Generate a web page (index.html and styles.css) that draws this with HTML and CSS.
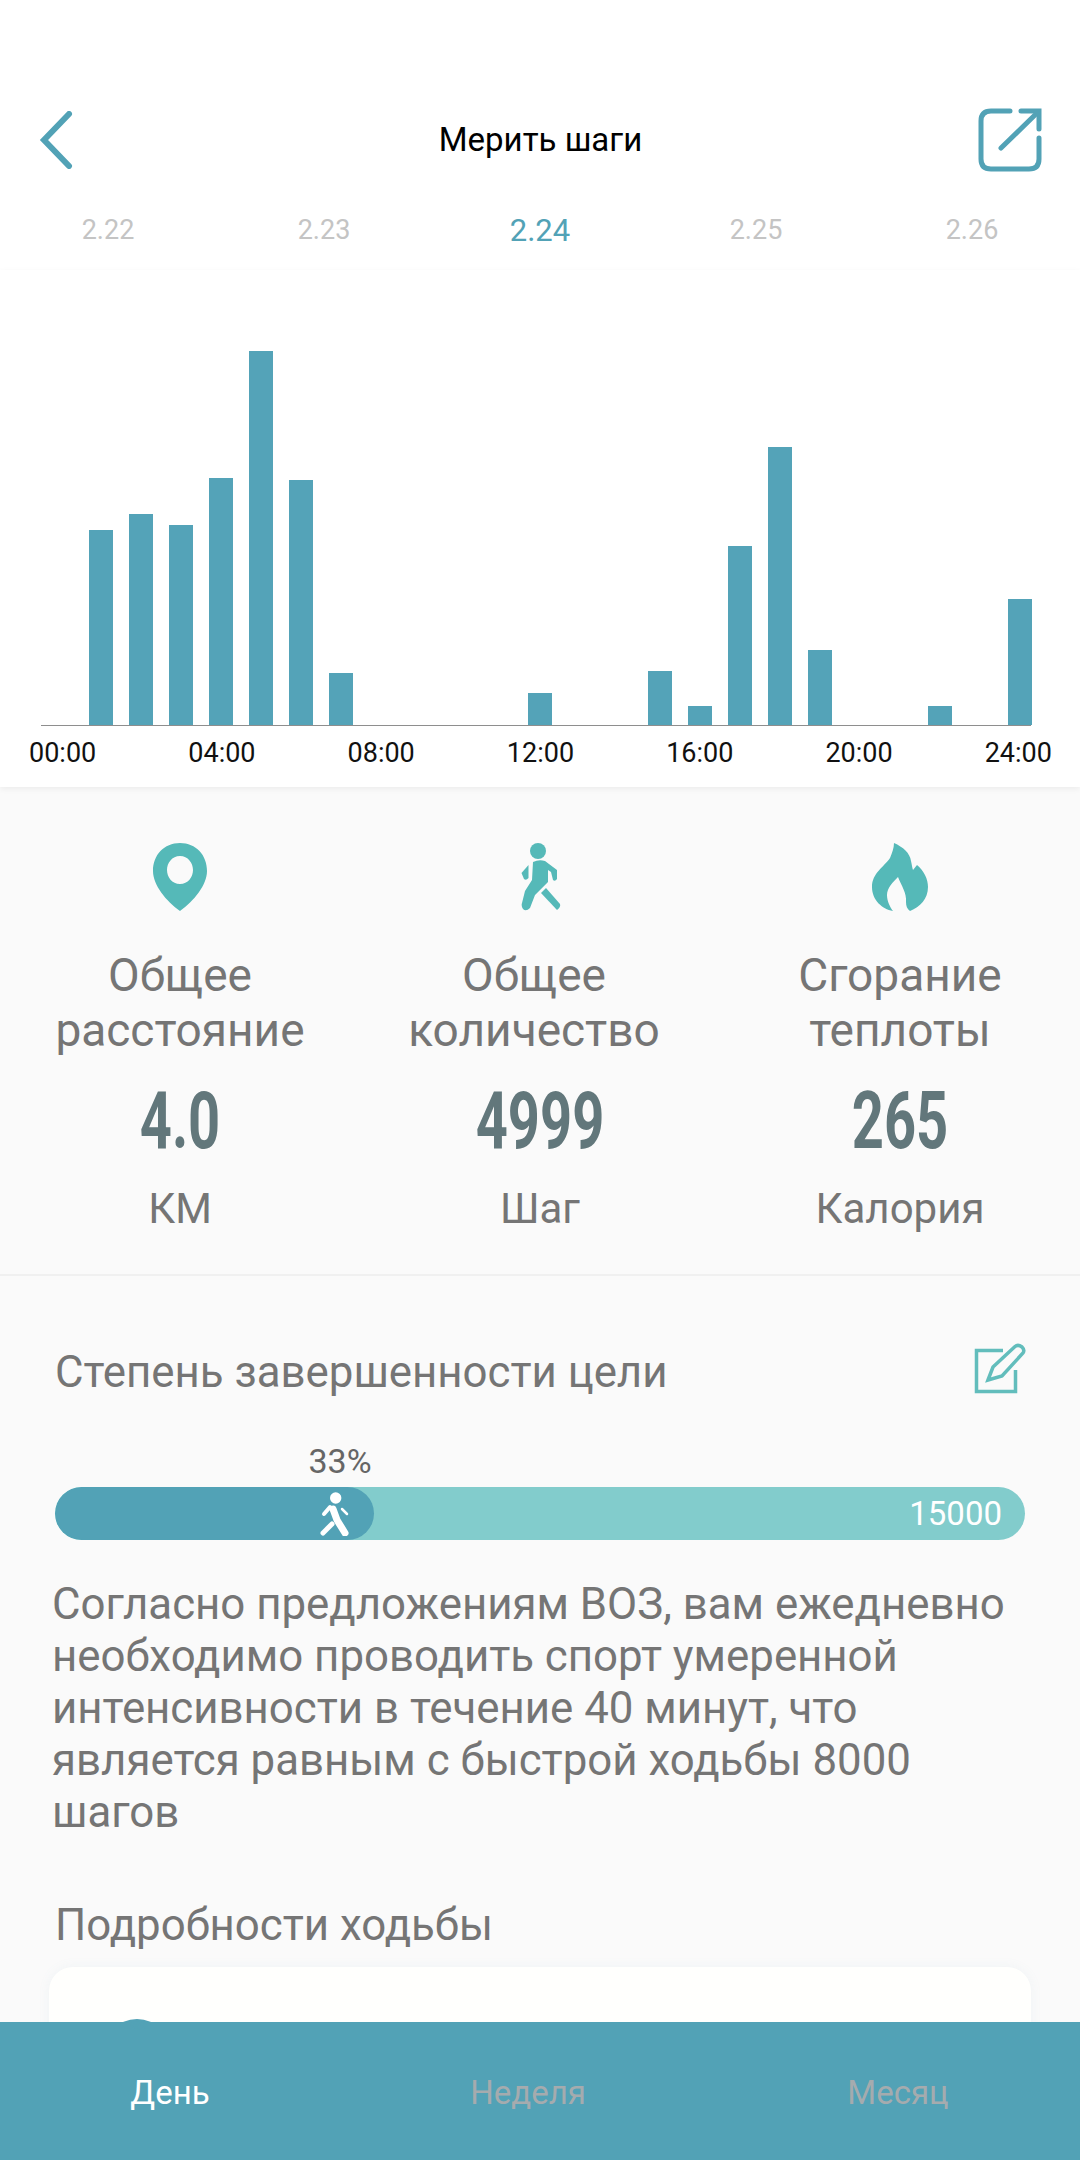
FILE: index.html
```html
<!DOCTYPE html>
<html lang="ru">
<head>
    <meta charset="UTF-8">
    <meta name="viewport" content="width=device-width, initial-scale=1.0">
    <title>Мерить шаги</title>
    <link rel="stylesheet" href="styles.css">
</head>
<body>
    <div class="content">
        <!-- Header -->
        <div class="header">
            <svg class="back-icon" viewBox="0 0 34 58"><path d="M30 3 L5 29 L30 55"/></svg>
            <h1>Мерить шаги</h1>
            <svg class="share-icon" viewBox="0 0 64 66"><path d="M32 4 H13 Q3 4 3 14 V52 Q3 62 13 62 H51 Q61 62 61 52 V31"/><path d="M23 41 L60 5"/><path d="M43 4 H61 V22"/></svg>
        </div>

        <!-- Dates -->
        <div class="dates">
            <span>2.22</span>
            <span>2.23</span>
            <span class="current">2.24</span>
            <span>2.25</span>
            <span>2.26</span>
        </div>

        <!-- Chart -->
        <div class="chart">
            <div class="bars">
                <div class="bar" style="height: 195px"></div>
                <div class="bar" style="height: 211px"></div>
                <div class="bar" style="height: 200px"></div>
                <div class="bar" style="height: 247px"></div>
                <div class="bar" style="height: 374px"></div>
                <div class="bar" style="height: 245px"></div>
                <div class="bar" style="height: 52px"></div>
                <div class="bar"></div>
                <div class="bar"></div>
                <div class="bar"></div>
                <div class="bar"></div>
                <div class="bar" style="height: 32px"></div>
                <div class="bar"></div>
                <div class="bar"></div>
                <div class="bar" style="height: 54px"></div>
                <div class="bar" style="height: 19px"></div>
                <div class="bar" style="height: 179px"></div>
                <div class="bar" style="height: 278px"></div>
                <div class="bar" style="height: 75px"></div>
                <div class="bar"></div>
                <div class="bar"></div>
                <div class="bar" style="height: 19px"></div>
                <div class="bar"></div>
                <div class="bar" style="height: 126px"></div>
            </div>
            <div class="hours">
                <span>00:00</span>
                <span>04:00</span>
                <span>08:00</span>
                <span>12:00</span>
                <span>16:00</span>
                <span>20:00</span>
                <span>24:00</span>
            </div>
        </div>

        <!-- Totals -->
        <div class="stats">
            <div class="stat">
                <svg class="stat-icon" viewBox="0 0 56 68"><path fill-rule="evenodd" d="M28 0 C12 0 1 12 1 28 C1 42 14 58 28 68 C42 58 55 42 55 28 C55 12 44 0 28 0 Z M28 13 C36 13 41 20 41 27 C41 34 36 41 28 41 C20 41 15 34 15 27 C15 20 20 13 28 13 Z"/></svg>
                <div class="stat-name">Общее<br>расстояние</div>
                <div class="stat-value">4.0</div>
                <div class="stat-unit">КМ</div>
            </div>
            <div class="stat">
                <svg class="stat-icon" viewBox="0 0 42 68"><circle cx="19" cy="8" r="8"/><path d="M14 19 Q20 16 26 18 L38 27 L38 36 Q36 39 34 37 L32 29 L29 27 L29 39 L16 52 L11 65 Q7 69 4 66 Q2 63 3 60 L6 48 L13 37 Z"/><path d="M9.500 22 L9.500 35 Q7 38 5 36 L2.500 30 Z"/><path d="M27 45 L41 61 Q42 64 38 67 L22 50 Z"/></svg>
                <div class="stat-name stat-name-shift">Общее<br>количество</div>
                <div class="stat-value">4999</div>
                <div class="stat-unit">Шаг</div>
            </div>
            <div class="stat">
                <svg class="stat-icon" viewBox="0 0 56 68"><path d="M22 0 C31 4 38 10 39 18 C40 22 40 24 41 27 L45 22 C52 28 56 36 56 44 C56 56 48 64 38 68 C35 66 34 63 34 59 C35 50 29 42 26 34 C21 39 15 45 15 52 C15 58 18 64 21 68 C10 66 0 57 0 44 C0 30 12 24 18 15 C20 10 22 5 22 0 Z"/></svg>
                <div class="stat-name">Сгорание<br>теплоты</div>
                <div class="stat-value">265</div>
                <div class="stat-unit">Калория</div>
            </div>
        </div>

        <!-- Goal -->
        <div class="goal">
            <div class="goal-head">
                <span class="section-title goal-title">Степень завершенности цели</span>
                <svg class="edit-icon" viewBox="0 0 50 50"><path d="M28 6.500 H1.500 V47.500 H40.500 V26"/><path d="M13 36 L18 23 L40 2.500 Q43 0 47 3 Q50 6 48 9 L27 32 Z"/></svg>
            </div>
            <div class="goal-percent">33%</div>
            <div class="progress">
                <div class="progress-fill" style="width: 319px">
                    <svg class="progress-walker" viewBox="0 0 30 44">
                        <circle cx="15.700" cy="6" r="5.700"/>
                        <path class="walker-body" d="M13 17 L17 28 L25 41"/>
                        <path class="walker-leg" d="M12 32 L3 41"/>
                        <path class="walker-arm" d="M10 15 L4 22"/>
                        <path class="walker-hand" d="M22 17 L27 22"/>
                    </svg>
                </div>
                <span class="progress-max">15000</span>
            </div>
            <p class="goal-note">Согласно предложениям ВОЗ, вам ежедневно необходимо проводить спорт умеренной интенсивности в течение 40 минут, что является равным с быстрой ходьбы 8000 шагов</p>
        </div>

        <!-- Walk details -->
        <div class="details">
            <div class="section-title">Подробности ходьбы</div>
            <div class="details-card">
                <div class="details-dot"></div>
            </div>
        </div>
    </div>

    <!-- Tabs -->
    <div class="tabs">
        <span class="tab active">День</span>
        <span class="tab">Неделя</span>
        <span class="tab">Месяц</span>
    </div>
</body>
</html>
```

FILE: styles.css
```css
* {
    box-sizing: border-box;
}

body {
    font-family: 'Roboto', 'Noto Sans', sans-serif;
    background-color: #fff;
    display: flex;
    flex-direction: column;
    height: 100vh;
    margin: 0;
    overflow: hidden;
}

.content {
    flex: 1;
    min-height: 0;
    overflow: hidden;
    background-color: #fafafa;
}

.header {
    display: flex;
    justify-content: space-between;
    align-items: center;
    height: 190px;
    padding: 90px 38px 0 39px;
    background-color: #fff;
}

.header h1 {
    flex: 1;
    margin: 0 0 2px;
    padding-left: 30px;
    text-align: center;
    color: #000;
    font-size: 33px;
    font-weight: 400;
}

.back-icon {
    width: 34px;
    height: 58px;
    fill: none;
    stroke: #52a2b6;
    stroke-width: 6;
    stroke-linecap: round;
}

.share-icon {
    width: 64px;
    height: 66px;
    fill: none;
    stroke: #52a2b6;
    stroke-width: 5;
    stroke-linecap: round;
}

.dates {
    display: grid;
    grid-template-columns: repeat(5, 1fr);
    height: 80px;
    align-items: center;
    text-align: center;
    background-color: #fff;
    color: #c4c4c4;
    font-size: 27px;
}

.dates .current {
    color: #52a2b6;
    font-size: 31px;
}

.chart {
    background-color: #fff;
    padding-top: 81px;
    height: 517px;
    box-shadow: 0 2px 6px rgba(0, 0, 0, 0.06);
    position: relative;
}

.bars {
    display: flex;
    align-items: flex-end;
    gap: 15.950px;
    height: 375px;
    margin: 0 49px 0 41px;
    padding-left: 48px;
    border-bottom: 1px solid #8e8e8e;
}

.bar {
    width: 24px;
    flex-shrink: 0;
    background-color: #54a3b8;
}

.hours {
    display: flex;
    justify-content: space-between;
    padding: 11px 28px 0 29px;
    color: #111;
    font-size: 27px;
}

.stats {
    display: grid;
    grid-template-columns: repeat(3, 1fr);
    height: 489px;
    padding-top: 56px;
    border-bottom: 2px solid #f0f0f0;
    text-align: center;
}

.stat-icon {
    display: block;
    height: 68px;
    margin: 0 auto 37px;
    fill: #55b9b8;
}

.stat-name {
    color: #757575;
    font-size: 46px;
    line-height: 55px;
}

.stat-name-shift {
    margin-right: 12px;
}

.stat-value {
    margin-top: 18px;
    color: #62777b;
    font-size: 80px;
    font-weight: 700;
    line-height: 90px;
    transform: scaleX(0.7);
}

.stat-unit {
    margin-top: 18px;
    color: #757575;
    font-size: 42px;
    line-height: 50px;
}

.goal {
    padding: 0 55px;
}

.goal-head {
    display: flex;
    justify-content: space-between;
    align-items: center;
    height: 50px;
    margin-top: 68px;
}

.section-title {
    color: #757575;
    font-size: 43.800px;
    line-height: 52px;
}

.goal-title {
    margin-top: 6px;
}

.edit-icon {
    width: 50px;
    height: 50px;
    fill: none;
    stroke: #62bdbc;
    stroke-width: 3.500;
    overflow: visible;
}

.goal-percent {
    margin: 46px 0 0 250px;
    width: 70px;
    text-align: center;
    color: #666;
    font-size: 34px;
    line-height: 42px;
}

.progress {
    display: flex;
    justify-content: space-between;
    align-items: center;
    height: 53px;
    margin-top: 5px;
    padding-right: 23px;
    background-color: #82cccc;
    border-radius: 27px;
    overflow: hidden;
}

.progress-fill {
    display: flex;
    justify-content: flex-end;
    align-items: center;
    height: 100%;
    padding-right: 24px;
    background-color: #52a2b6;
    border-radius: 27px;
}

.progress-walker {
    width: 30px;
    height: 44px;
    fill: #fff;
    stroke: #fff;
    stroke-linecap: round;
    stroke-linejoin: round;
}

.progress-walker circle {
    stroke: none;
}

.walker-body {
    fill: none;
    stroke-width: 7;
}

.walker-leg {
    stroke-width: 5;
}

.walker-arm {
    stroke-width: 4;
}

.walker-hand {
    stroke-width: 2.500;
}

.progress-max {
    color: #fff;
    font-size: 33px;
}

.goal-note {
    margin: 38px 0 0 -3px;
    color: #757575;
    font-size: 43.800px;
    line-height: 52px;
}

.details {
    padding: 0 49px;
    margin-top: 61px;
}

.details .section-title {
    margin-left: 6px;
}

.details-card {
    height: 200px;
    margin-top: 16px;
    padding: 52px 0 0 53px;
    background-color: #fffffd;
    border-radius: 24px;
    box-shadow: 0 0 12px rgba(120, 160, 190, 0.08);
}

.details-dot {
    width: 70px;
    height: 70px;
    border-radius: 50%;
    background-color: #52a2b6;
}

.tabs {
    display: grid;
    grid-template-columns: 340px 376px 1fr;
    flex-shrink: 0;
    height: 138px;
    padding-top: 2px;
    align-items: center;
    text-align: center;
    background-color: #52a2b6;
}

.tab {
    color: #a5abae;
    font-size: 33px;
}

.tab.active {
    color: #fff;
}
```
